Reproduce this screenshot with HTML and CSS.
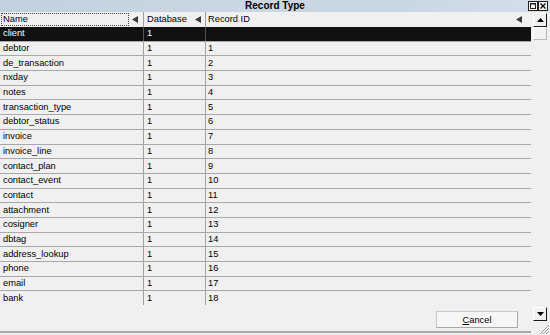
FILE: index.html
```html
<!DOCTYPE html>
<html>
<head>
<meta charset="utf-8">
<link rel="stylesheet" href="styles.css">
</head>
<body>
<div class="win">
  <div class="titlebar">
    <span></span>
    <span class="title">Record Type</span>
    <div class="tbtns">
      <svg class="tbtn" width="10" height="10" viewBox="0 0 10 10"><rect x="0.5" y="0.5" width="9" height="9" fill="#f4f4f4" stroke="#202020"/><rect x="2.5" y="2.5" width="5" height="5" fill="none" stroke="#202020"/><line x1="2" y1="3" x2="8" y2="3" stroke="#202020"/></svg>
      <svg class="tbtn" width="10" height="10" viewBox="0 0 10 10"><rect x="0.5" y="0.5" width="9" height="9" fill="#f4f4f4" stroke="#202020"/><path d="M2.5 2.5 L7.5 7.5 M7.5 2.5 L2.5 7.5" stroke="#101010" stroke-width="1.4"/></svg>
    </div>
  </div>
  <div class="main">
    <div class="left">
      <div class="grid">
        <div class="row head">
          <div class="cell c1"><span class="focus">Name</span><svg class="arr" width="6" height="7" viewBox="0 0 6 7"><polygon points="6,0 6,7 0,3.5" fill="#3a3a3a"/></svg></div>
          <div class="cell c2"><span class="lbl">Database</span><svg class="arr" width="6" height="7" viewBox="0 0 6 7"><polygon points="6,0 6,7 0,3.5" fill="#3a3a3a"/></svg></div>
          <div class="cell c3"><span class="lbl">Record ID</span><svg class="arr" width="6" height="7" viewBox="0 0 6 7"><polygon points="6,0 6,7 0,3.5" fill="#3a3a3a"/></svg></div>
        </div>
        <div class="rows">
          <div class="row sel"><div class="cell c1">client</div><div class="cell c2">1</div><div class="cell c3"></div></div>
          <div class="row"><div class="cell c1">debtor</div><div class="cell c2">1</div><div class="cell c3">1</div></div>
          <div class="row"><div class="cell c1">de_transaction</div><div class="cell c2">1</div><div class="cell c3">2</div></div>
          <div class="row"><div class="cell c1">nxday</div><div class="cell c2">1</div><div class="cell c3">3</div></div>
          <div class="row"><div class="cell c1">notes</div><div class="cell c2">1</div><div class="cell c3">4</div></div>
          <div class="row"><div class="cell c1">transaction_type</div><div class="cell c2">1</div><div class="cell c3">5</div></div>
          <div class="row"><div class="cell c1">debtor_status</div><div class="cell c2">1</div><div class="cell c3">6</div></div>
          <div class="row"><div class="cell c1">invoice</div><div class="cell c2">1</div><div class="cell c3">7</div></div>
          <div class="row"><div class="cell c1">invoice_line</div><div class="cell c2">1</div><div class="cell c3">8</div></div>
          <div class="row"><div class="cell c1">contact_plan</div><div class="cell c2">1</div><div class="cell c3">9</div></div>
          <div class="row"><div class="cell c1">contact_event</div><div class="cell c2">1</div><div class="cell c3">10</div></div>
          <div class="row"><div class="cell c1">contact</div><div class="cell c2">1</div><div class="cell c3">11</div></div>
          <div class="row"><div class="cell c1">attachment</div><div class="cell c2">1</div><div class="cell c3">12</div></div>
          <div class="row"><div class="cell c1">cosigner</div><div class="cell c2">1</div><div class="cell c3">13</div></div>
          <div class="row"><div class="cell c1">dbtag</div><div class="cell c2">1</div><div class="cell c3">14</div></div>
          <div class="row"><div class="cell c1">address_lookup</div><div class="cell c2">1</div><div class="cell c3">15</div></div>
          <div class="row"><div class="cell c1">phone</div><div class="cell c2">1</div><div class="cell c3">16</div></div>
          <div class="row"><div class="cell c1">email</div><div class="cell c2">1</div><div class="cell c3">17</div></div>
          <div class="row"><div class="cell c1">bank</div><div class="cell c2">1</div><div class="cell c3">18</div></div>
        </div>
      </div>
      <div class="footer">
        <button class="btn"><u>C</u>ancel</button>
      </div>
    </div>
    <div class="right">
      <div class="sb">
        <div class="sbtn"><svg width="7" height="4" viewBox="0 0 7 4"><polygon points="0,4 7,4 3.5,0" fill="#000"/></svg></div>
        <div class="thumb"></div>
        <div class="track"></div>
        <div class="sbtn"><svg width="7" height="4" viewBox="0 0 7 4"><polygon points="0,0 7,0 3.5,4" fill="#000"/></svg></div>
      </div>
      <div class="grip">
        <svg width="12" height="12" viewBox="0 0 12 12"><path d="M11 2 L2 11 M11 5 L5 11 M11 8 L8 11" stroke="#9a9a9a" stroke-width="1"/></svg>
      </div>
    </div>
  </div>
</div>
</body>
</html>
```

FILE: styles.css
```css
* { box-sizing: border-box; }
html, body { margin: 0; padding: 0; }
body {
  width: 550px;
  height: 335px;
  overflow: hidden;
  background: #f0f0f0;
  font-family: "Liberation Sans", Arial, sans-serif;
  font-size: 9.3px;
  color: #000;
}
.win {
  display: flex;
  flex-direction: column;
  width: 550px;
  height: 335px;
}
.titlebar {
  height: 12px;
  display: grid;
  grid-template-columns: 1fr auto 1fr;
  align-items: center;
  background: linear-gradient(to right, #c3d0de 0%, #cad6e2 40%, #c9d6e3 70%, #d4dfea 100%);
}
.title {
  font-weight: bold;
  font-size: 10px;
  line-height: 12px;
}
.tbtns {
  display: flex;
  justify-content: flex-end;
  gap: 0;
  padding-right: 2px;
}
.tbtn { display: block; }
.main {
  flex: 1;
  display: flex;
  min-height: 0;
}
.left {
  width: 531px;
  display: flex;
  flex-direction: column;
}
.grid {
  height: 293px;
  overflow: hidden;
}
.row {
  display: flex;
  height: 14.7px;
  border-bottom: 1px solid #a9a9a9;
  width: 531px;
}
.row.head {
  height: 15px;
  border-bottom: none;
}
.cell {
  display: flex;
  align-items: center;
  padding-left: 3px;
  white-space: nowrap;
  line-height: 13px;
}
.c1 { width: 144px; border-right: 1px solid #a0a0a0; }
.c2 { width: 62px; border-right: 1px solid #a0a0a0; }
.c3 { flex: 1; padding-left: 2px; }
.head .cell { justify-content: space-between; padding-right: 4px; }
.head .c1 { padding-left: 1px; padding-right: 5px; }
.head .c3 { padding-right: 9px; }
.focus {
  display: flex;
  align-items: center;
  width: 128px;
  height: 13px;
  border: 1px dotted #404040;
  padding-left: 1px;
}
.arr { display: block; }
.row.sel { background: #111; color: #fff; }
.row.sel .cell { border-right-color: #555; }
.footer {
  flex: 1;
  display: flex;
  justify-content: flex-end;
  align-items: flex-start;
  padding: 6px 13px 0 0;
  border-bottom: 2px solid #a8a8a8;
  margin-bottom: 2px;
}
.btn {
  width: 82px;
  height: 17px;
  padding: 0;
  font-family: inherit;
  font-size: 9.3px;
  color: #000;
  background: #f6f6f6;
  border: 1px solid #c8c8c8;
  border-right-color: #a8a8a8;
  border-bottom-color: #a8a8a8;
}
.right {
  width: 19px;
  display: flex;
  flex-direction: column;
  padding-left: 2px;
}
.sb {
  flex: 1;
  display: flex;
  flex-direction: column;
  padding-top: 1px;
}
.sbtn {
  width: 14px;
  height: 14px;
  display: flex;
  align-items: center;
  justify-content: center;
  background: #f0f0f0;
  border-top: 1px solid #fff;
  border-left: 1px solid #fff;
  border-right: 1px solid #1a1a1a;
  border-bottom: 1px solid #1a1a1a;
}
.thumb {
  width: 14px;
  height: 13px;
  background: #f2f2f2;
  border-right: 1px solid #b8b8b8;
  border-bottom: 1px solid #b8b8b8;
  border-top: 1px solid #fff;
  border-left: 1px solid #fff;
}
.track { flex: 1; }
.grip {
  height: 14px;
  display: flex;
  justify-content: flex-end;
  align-items: flex-end;
}
.grip svg { display: block; }
```
